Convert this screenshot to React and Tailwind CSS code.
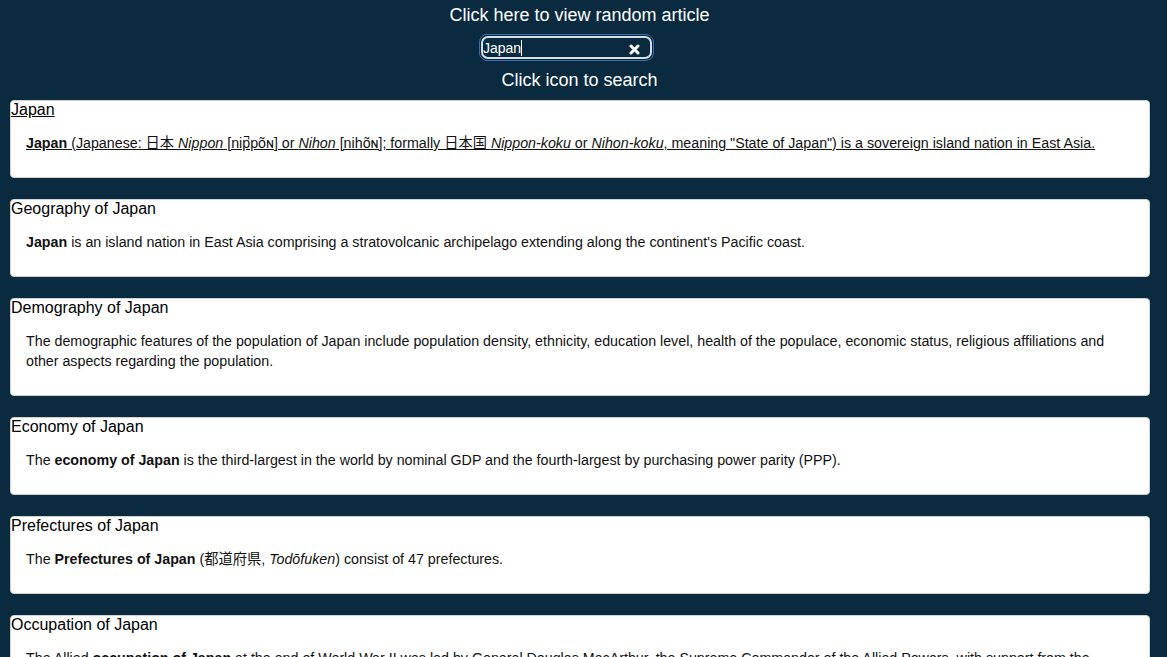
import React from "react";

const cards = [
  {
    title: "Japan",
    underline: true,
    body: (
      <span className="underline">
        <b>Japan</b> (Japanese: 日本 <i>Nippon</i> [nip̚põɴ] or <i>Nihon</i> [nihõɴ]; formally 日本国 <i>Nippon-koku</i> or <i>Nihon-koku</i>, meaning "State of Japan") is a sovereign island nation in East Asia.
      </span>
    ),
  },
  {
    title: "Geography of Japan",
    body: (
      <>
        <b>Japan</b> is an island nation in East Asia comprising a stratovolcanic archipelago extending along the continent's Pacific coast.
      </>
    ),
  },
  {
    title: "Demography of Japan",
    body: (
      <>
        The demographic features of the population of Japan include population density, ethnicity, education level, health of the populace, economic status, religious affiliations and other aspects regarding the population.
      </>
    ),
  },
  {
    title: "Economy of Japan",
    body: (
      <>
        The <b>economy of Japan</b> is the third-largest in the world by nominal GDP and the fourth-largest by purchasing power parity (PPP).
      </>
    ),
  },
  {
    title: "Prefectures of Japan",
    body: (
      <>
        The <b>Prefectures of Japan</b> (都道府県, <i>Todōfuken</i>) consist of 47 prefectures.
      </>
    ),
  },
  {
    title: "Occupation of Japan",
    body: (
      <>
        The Allied <b>occupation of Japan</b> at the end of World War II was led by General Douglas MacArthur, the Supreme Commander of the Allied Powers, with support from the British Commonwealth. This foreign presence marked the first time in its history that the island nation had been occupied by a foreign power.
      </>
    ),
  },
];

export default function App() {
  return (
    <div
      className="w-[1167px] h-[657px] overflow-hidden bg-[#0a2a3f] text-white"
      style={{ fontFamily: '"Liberation Sans", Arial, "Noto Sans CJK JP", sans-serif' }}
    >
      <div className="flex flex-col items-center pt-[5px]">
        <div className="mr-[8px] text-[18px] leading-[21px] text-white">Click here to view random article</div>
        <div className="mt-[8px] mr-[34px] w-[175px] h-[27px] rounded-[8px] border border-[#3b6db0] p-[1px]">
          <div className="relative w-full h-full rounded-[7px] border-2 border-[#d8dde3] flex items-center">
            <span className="text-[14px] leading-[16px] text-white">Japan</span>
            <span className="w-[1px] h-[16px] bg-white"></span>
            <svg className="absolute right-[10px] top-[6px]" width="11" height="11" viewBox="0 0 11 11">
              <path d="M2 2 L9 9 M9 2 L2 9" stroke="white" strokeWidth="3" strokeLinecap="round" />
            </svg>
          </div>
        </div>
        <div className="mt-[9px] mr-[8px] text-[18px] leading-[21px] text-white">Click icon to search</div>
      </div>
      <div className="mt-[9px] ml-[10px] w-[1140px] flex flex-col gap-[21px]">
        {cards.map((c, i) => (
          <div key={i} className="bg-white rounded-[4px] border border-[#d0d0d0] text-black pb-[24px]">
            <div className={"text-[16px] leading-[18px] " + (c.underline ? "underline" : "")}>{c.title}</div>
            <div className="mt-[14px] pl-[15px] pr-[16px] text-[14.25px] leading-[20px] text-[#111]">{c.body}</div>
          </div>
        ))}
      </div>
    </div>
  );
}
